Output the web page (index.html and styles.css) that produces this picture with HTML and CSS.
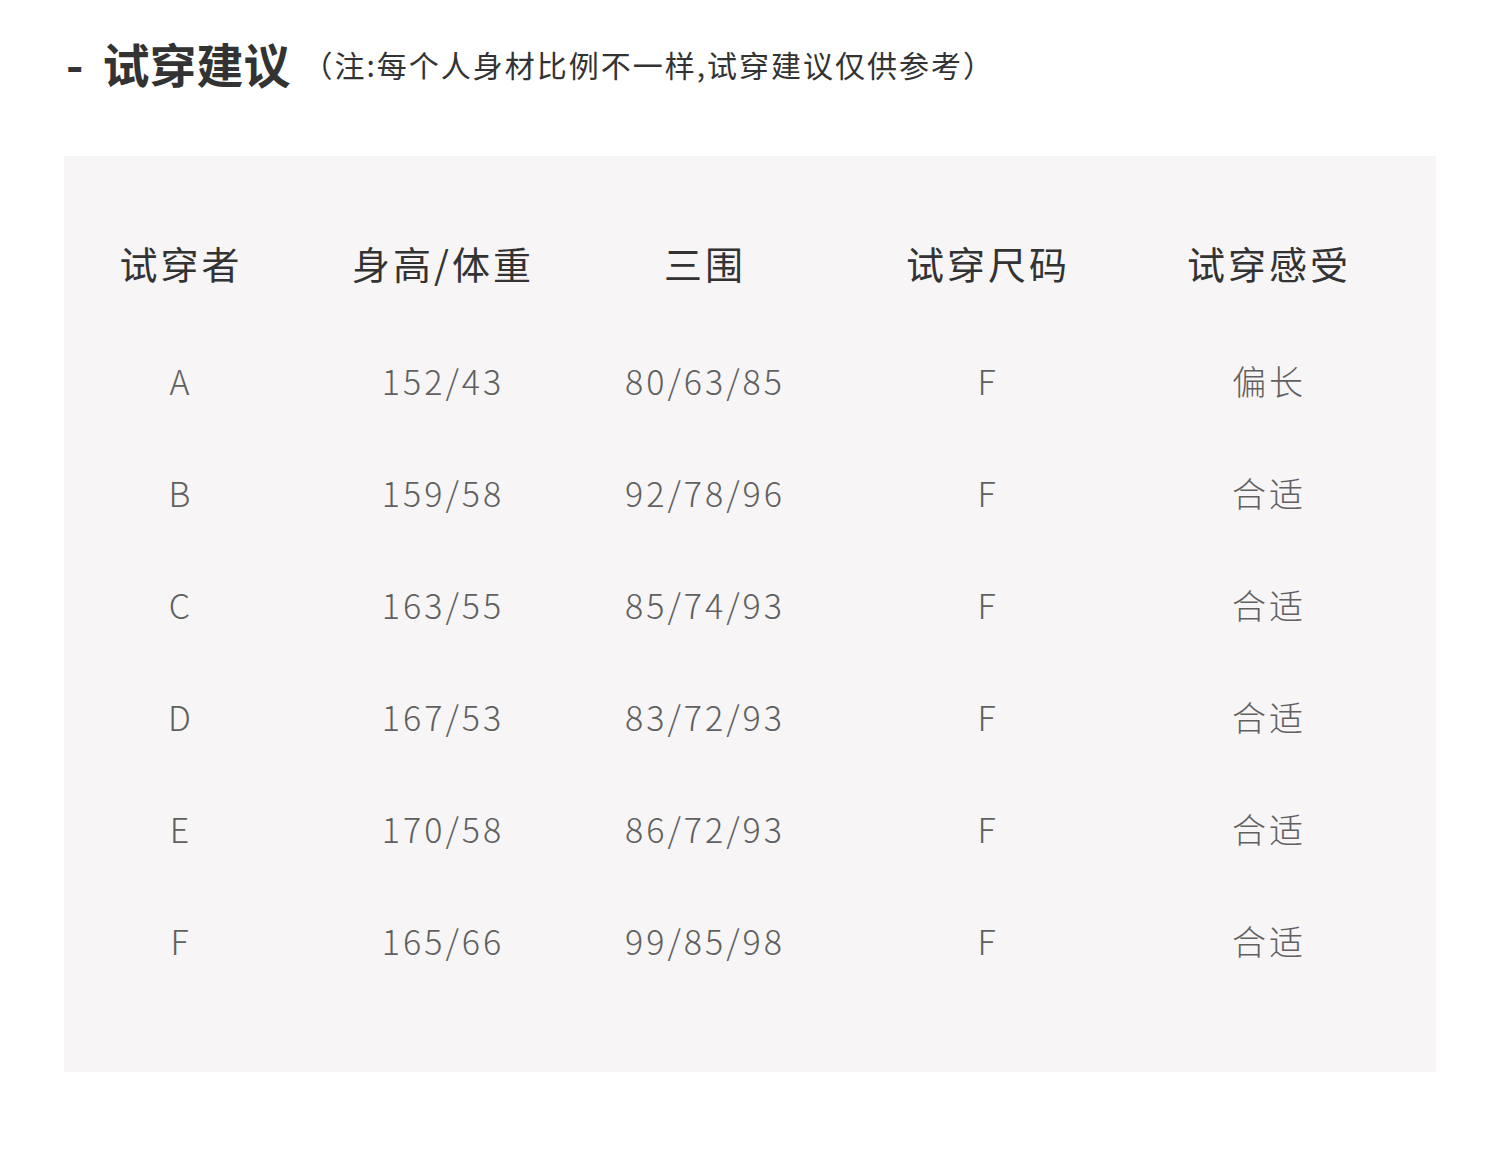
FILE: index.html
```html
<!DOCTYPE html>
<html lang="zh-CN">
<head>
<meta charset="utf-8">
<title>试穿建议</title>
<link rel="stylesheet" href="styles.css">
</head>
<body>
<div class="page">
  <div class="title-row">
    <h1 class="title"><span class="dash">-</span><span class="title-text">试穿建议</span></h1>
    <span class="note">（注:每个人身材比例不一样,试穿建议仅供参考）</span>
  </div>
  <div class="panel">
    <div class="grid head">
      <div>试穿者</div><div>身高/体重</div><div>三围</div><div>试穿尺码</div><div>试穿感受</div>
    </div>
    <div class="grid row"><div>A</div><div>152/43</div><div>80/63/85</div><div>F</div><div>偏长</div></div>
    <div class="grid row"><div>B</div><div>159/58</div><div>92/78/96</div><div>F</div><div>合适</div></div>
    <div class="grid row"><div>C</div><div>163/55</div><div>85/74/93</div><div>F</div><div>合适</div></div>
    <div class="grid row"><div>D</div><div>167/53</div><div>83/72/93</div><div>F</div><div>合适</div></div>
    <div class="grid row"><div>E</div><div>170/58</div><div>86/72/93</div><div>F</div><div>合适</div></div>
    <div class="grid row"><div>F</div><div>165/66</div><div>99/85/98</div><div>F</div><div>合适</div></div>
  </div>
</div>
</body>
</html>
```
FILE: styles.css
```css
html, body {
  margin: 0;
  padding: 0;
  background: #ffffff;
}
body {
  font-family: "Noto Sans CJK SC", "Noto Sans", sans-serif;
  color: #333333;
}
.page {
  width: 1500px;
  height: 1152px;
}
.title-row {
  display: flex;
  align-items: center;
  height: 156px;
  padding-left: 66px;
  padding-bottom: 32px;
  box-sizing: border-box;
}
.title {
  margin: 0;
  display: flex;
  align-items: center;
  font-size: 47px;
  font-weight: 700;
  line-height: 1;
  color: #333333;
}
.dash {
  margin-right: 19px;
}
.note {
  margin-left: 12px;
  font-size: 30px;
  letter-spacing: 2px;
  line-height: 1;
  color: #333333;
  padding-top: 4px;
}
.panel {
  margin-left: 64px;
  width: 1372px;
  height: 916px;
  background: #f7f5f6;
  padding-top: 50px;
  box-sizing: border-box;
}
.grid {
  display: grid;
  grid-template-columns: 234px 290px 234px 332px 230px;
  align-items: center;
  text-align: center;
}
.head {
  height: 112px;
  margin-bottom: 6px;
  font-size: 38px;
  letter-spacing: 3px;
  color: #333333;
  font-weight: 400;
}
.row {
  height: 112px;
  font-size: 34px;
  font-weight: 300;
  letter-spacing: 3px;
  color: #606060;
}
```
